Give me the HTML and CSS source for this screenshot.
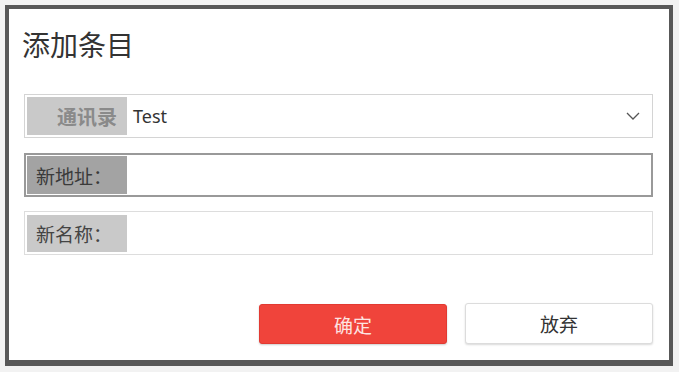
FILE: index.html
```html
<!DOCTYPE html>
<html lang="zh-CN">
<head>
<meta charset="utf-8">
<title>添加条目</title>
<link rel="stylesheet" href="styles.css">
</head>
<body>
<div class="dialog">
  <h1 class="title">添加条目</h1>
  <div class="field field-select">
    <div class="label label-bold">通讯录</div>
    <div class="value">Test</div>
    <svg class="chevron" width="14" height="8" viewBox="0 0 14 8"><path d="M1 1 L7 7 L13 1" fill="none" stroke="#555" stroke-width="1.3"/></svg>
  </div>
  <div class="field field-focus">
    <div class="label label-dark">新地址：</div>
    <div class="value"></div>
  </div>
  <div class="field field-plain">
    <div class="label">新名称：</div>
    <div class="value"></div>
  </div>
  <div class="actions">
    <button class="btn btn-primary">确定</button>
    <button class="btn btn-secondary">放弃</button>
  </div>
</div>
</body>
</html>
```
FILE: styles.css
```css
html, body {
  margin: 0;
  padding: 0;
  background: #f2f2f2;
}
body {
  font-family: "Noto Sans", "Noto Sans CJK SC", sans-serif;
  width: 679px;
  height: 372px;
  overflow: hidden;
}
.dialog {
  box-sizing: border-box;
  margin: 5px 0 0 5px;
  width: 668px;
  height: 361px;
  background: #ffffff;
  border: 4px solid #585858;
  border-bottom-width: 6px;
  padding: 18px 16px 0 15px;
  display: flex;
  flex-direction: column;
}
.title {
  margin: 0 0 0 -2px;
  font-family: "Noto Sans CJK SC", sans-serif;
  font-weight: 400;
  font-size: 28px;
  line-height: 34px;
  color: #333333;
}
.field {
  box-sizing: border-box;
  height: 44px;
  display: flex;
  align-items: stretch;
  background: #fff;
}
.field-select {
  margin-top: 33px;
  border: 1px solid #d4d4d4;
  padding: 2px;
  align-items: center;
}
.field-focus {
  margin-top: 15px;
  border: 2px solid #999999;
  padding: 1px;
}
.field-plain {
  margin-top: 14px;
  border: 1px solid #dddddd;
  padding: 3px 2px 2px;
}
.label {
  width: 100px;
  flex: none;
  align-self: stretch;
  background: #c9c9c9;
  color: #444;
  font-family: "Noto Sans CJK SC", sans-serif;
  font-size: 19px;
  display: flex;
  align-items: center;
  padding-left: 9px;
  box-sizing: border-box;
}
.label-bold {
  justify-content: flex-end;
  padding-left: 0;
  padding-right: 10px;
  font-weight: 700;
  color: #8a8a8a;
  font-size: 20px;
}
.label-dark {
  background: #a3a3a3;
  color: #3a3a3a;
}
.value {
  flex: 1;
  padding-left: 6px;
  font-size: 18px;
  color: #333;
  display: flex;
  align-items: center;
}
.chevron {
  margin-right: 10px;
  flex: none;
}
.actions {
  margin-top: 49px;
  display: flex;
  justify-content: flex-end;
  gap: 18px;
}
.btn {
  width: 188px;
  height: 40px;
  border-radius: 3px;
  font-family: "Noto Sans CJK SC", sans-serif;
  font-size: 19px;
  cursor: pointer;
}
.btn-primary {
  background: #f0443b;
  border: 1px solid #e23a32;
  color: #fde3e1;
  box-shadow: 0 1px 2px rgba(0,0,0,0.2);
}
.btn-secondary {
  background: #ffffff;
  border: 1px solid #dcdcdc;
  color: #333;
  box-shadow: 0 1px 2px rgba(0,0,0,0.15);
  margin-top: -1px;
  height: 41px;
}
```
